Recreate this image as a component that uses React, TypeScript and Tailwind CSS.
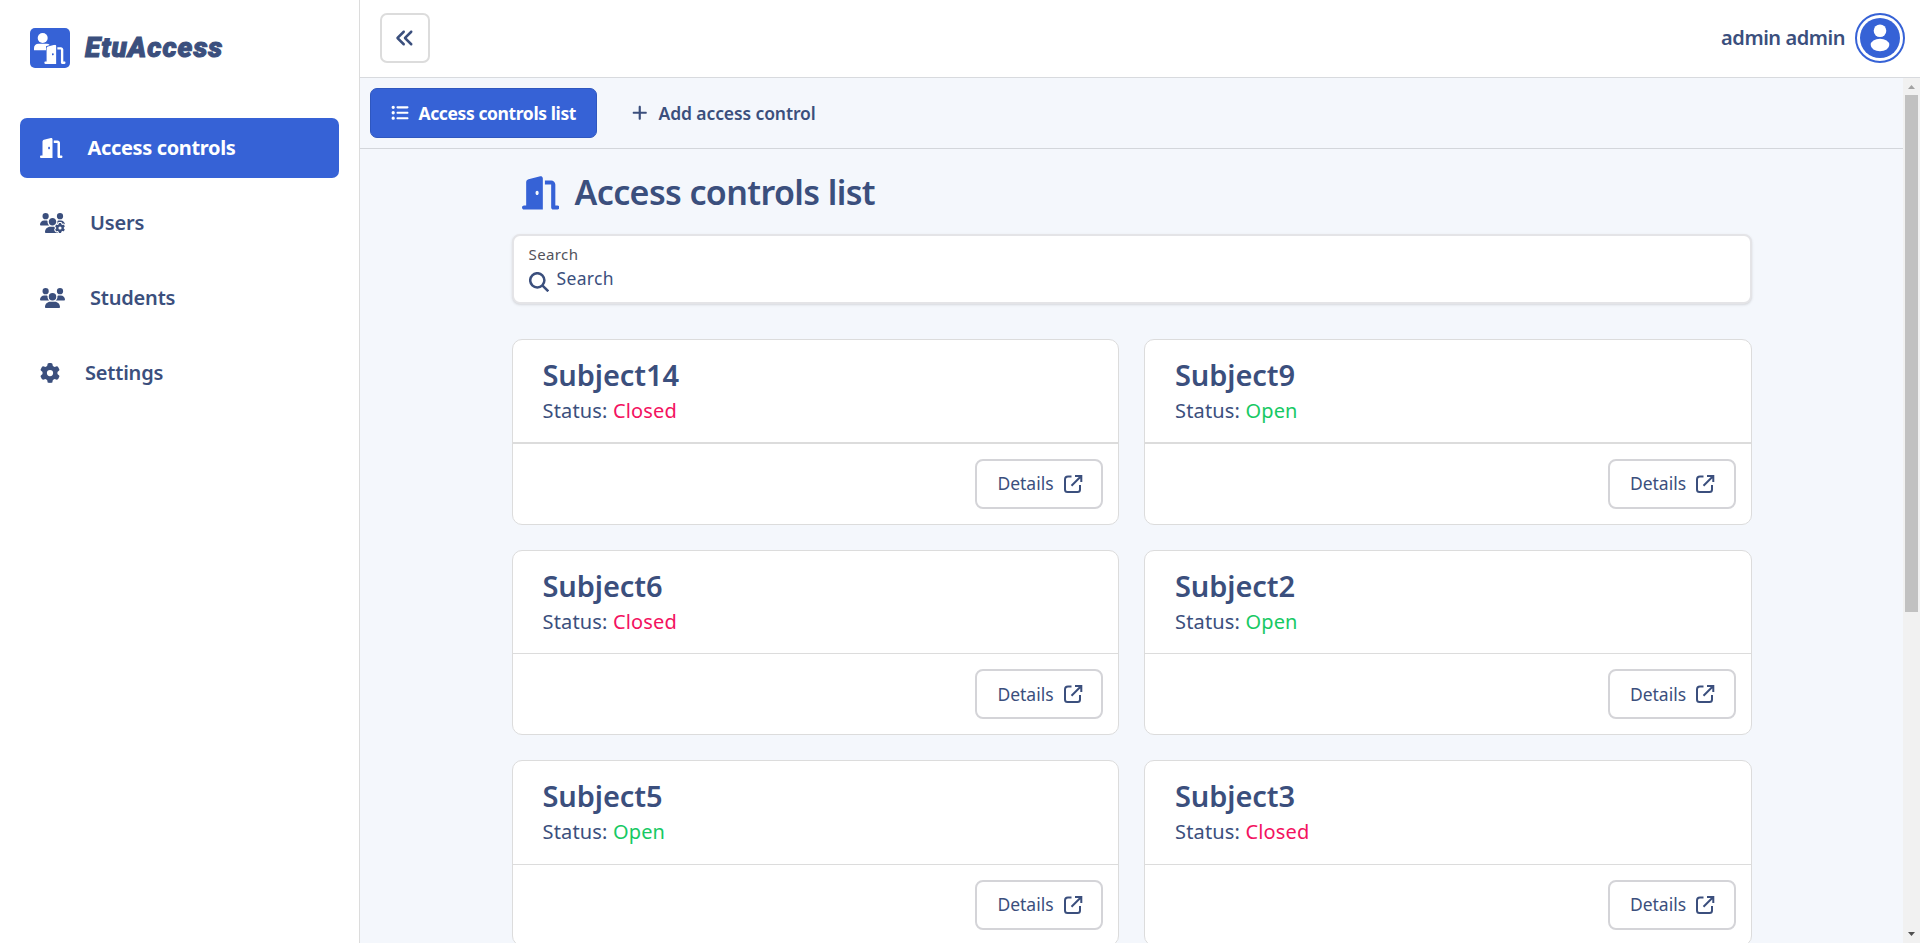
import type { ReactNode } from "react";
import {
  FaDoorOpen,
  FaGear,
  FaUsersGear,
  FaUsers,
  FaAnglesLeft,
  FaListUl,
  FaPlus,
} from "react-icons/fa6";

type Subject = { name: string; open: boolean };

const subjects: Subject[] = [
  { name: "Subject14", open: false },
  { name: "Subject9", open: true },
  { name: "Subject6", open: false },
  { name: "Subject2", open: true },
  { name: "Subject5", open: true },
  { name: "Subject3", open: false },
];

function Logo() {
  return (
    <div className="flex h-10 items-center gap-[15px] pl-[10px]">
      <svg viewBox="0 0 40 40" className="size-10 shrink-0">
        <rect width="40" height="40" rx="5" fill="#3662d6" />
        <circle cx="12.7" cy="10" r="5" fill="#fff" />
        <path d="M4 22.2v-1.700A4.500 4.500 0 0 1 8.500 15.700h8a4.500 4.500 0 0 1 3.300 1.200L16 18.300v3.900Z" fill="#fff" />
        <path d="M16 36V19.500l8.500-3V36Z" fill="#3662d6" />
        <svg x="14.200" y="16.800" width="21.500" height="19.100" viewBox="0 0 576 512">
          <FaDoorOpen color="#fff" size={576} y={-32} />
        </svg>
      </svg>
      <span className="font-['Roboto'] text-[28px] leading-none font-black tracking-[1px] italic [-webkit-text-stroke:1px_#3b4f7d]">
        EtuAccess
      </span>
    </div>
  );
}

function NavItem({ icon, label, active = false }: { icon: ReactNode; label: string; active?: boolean }) {
  return (
    <a
      className={
        active
          ? "flex h-[60px] items-center gap-[25px] rounded-[7px] bg-[#3662d6] px-5 font-bold tracking-[-0.35px] text-white"
          : "flex h-[60px] items-center gap-[25px] rounded-[7px] px-5 font-semibold tracking-[-0.2px]"
      }
    >
      {icon}
      <span className="pb-px text-[20px]">{label}</span>
    </a>
  );
}

function Sidebar() {
  return (
    <aside className="flex w-[360px] shrink-0 flex-col border-r border-[#dcdcdc] bg-white px-5 pt-7">
      <Logo />
      <nav className="mt-[50px] flex flex-col gap-[15px]">
        <NavItem active icon={<FaDoorOpen className="h-5 w-[22.5px]" />} label="Access controls" />
        <NavItem icon={<FaUsersGear className="h-5 w-[25px]" />} label="Users" />
        <NavItem icon={<FaUsers className="h-5 w-[25px]" />} label="Students" />
        <NavItem icon={<FaGear className="size-5" />} label="Settings" />
      </nav>
    </aside>
  );
}

function Header() {
  return (
    <header className="flex h-[78px] shrink-0 items-start justify-between border-b border-[#d8dade] bg-white pt-[13px] pr-[15px] pl-5">
      <button className="flex size-[50px] items-center justify-center rounded-[7px] border-2 border-[#dcdcdc]">
        <FaAnglesLeft className="size-5" />
      </button>
      <div className="flex items-center gap-[10px]">
        <span className="pb-px text-[20px] font-semibold tracking-[-0.45px]">admin admin</span>
        <svg viewBox="0 0 50 50" className="size-[50px]">
          <circle cx="25" cy="25" r="24" fill="#fff" stroke="#3662d6" strokeWidth="2" />
          <circle cx="25" cy="25" r="20" fill="#3662d6" />
          <circle cx="25" cy="17.700" r="6.300" fill="#fff" />
          <ellipse cx="25" cy="32" rx="9.300" ry="6.200" fill="#fff" />
        </svg>
      </div>
    </header>
  );
}

function ExternalIcon() {
  return (
    <svg viewBox="0 0 20 20" className="size-5" fill="none" stroke="currentColor" strokeWidth="2">
      <path d="M8.500 2.500H5A3 3 0 0 0 2 5.500v10a2.500 2.500 0 0 0 2.500 2.500H14.500a2.500 2.500 0 0 0 2.500-2.500V11" />
      <path d="M12 2H18.300v6M18 2.300l-9.500 9.500" />
    </svg>
  );
}

function SubjectCard({ subject, thick }: { subject: Subject; thick: boolean }) {
  return (
    <article className="flex h-[185.6px] flex-col rounded-[10px] border border-[#dcdcdc] bg-white">
      <div className={thick ? "h-[102px] shrink-0 px-[30px] pt-[17px]" : "h-[102.6px] shrink-0 px-[30px] pt-[17px]"}>
        <h2 className="text-[29px] leading-[36px] font-semibold tracking-[-0.1px]">{subject.name}</h2>
        <p className="pt-px text-[20px] leading-[34px] tracking-[0.16px]">
          Status:{" "}
          <span className={subject.open ? "text-[#17c964]" : "text-[#f31260]"}>
            {subject.open ? "Open" : "Closed"}
          </span>
        </p>
      </div>
      <div className={thick ? "h-[2px] shrink-0 bg-[#dcdcdc]" : "h-px shrink-0 bg-[#dcdcdc]"} />
      <div className="flex justify-end pt-[15px] pr-[15px]">
        <button className="flex h-[50px] w-32 items-center justify-center gap-[9px] rounded-[8px] border-2 border-[#d4d4d8] pl-[2px]">
          <span className="pb-px text-[17.5px]">Details</span>
          <ExternalIcon />
        </button>
      </div>
    </article>
  );
}

function Scrollbar() {
  return (
    <div className="flex w-[17px] shrink-0 flex-col items-center bg-[#f1f1f1]">
      <svg viewBox="0 0 17 17" className="size-[17px] shrink-0">
        <path d="M5 11h7L8.500 7Z" fill="#a3a3a3" />
      </svg>
      <div className="h-[517px] w-[13px] bg-[#c1c1c1]" />
      <svg viewBox="0 0 17 17" className="mt-auto size-[17px] shrink-0">
        <path d="M5 6h7L8.500 10Z" fill="#505050" />
      </svg>
    </div>
  );
}

export default function App() {
  return (
    <div className="flex h-[943px] overflow-hidden bg-[#f4f7fc] font-['Noto_Sans',sans-serif] text-[#3b4f7d]">
      <Sidebar />
      <div className="flex min-w-0 flex-1 flex-col">
        <Header />
        <div className="flex min-h-0 flex-1">
          <main className="flex min-w-0 flex-1 flex-col overflow-hidden">
            <div className="flex h-[71px] shrink-0 items-center gap-[14px] border-b border-[#d3d6db] px-[10px]">
              <button className="flex h-[50px] w-[227px] items-center gap-[10px] rounded-[7px] border border-[#2f57bf] bg-[#3662d6] pl-5 text-white">
                <FaListUl className="size-[17.5px]" />
                <span className="text-[17.5px] font-bold tracking-[-0.4px]">Access controls list</span>
              </button>
              <button className="flex h-[50px] items-center gap-[10px] px-5">
                <FaPlus className="size-[17.5px]" />
                <span className="text-[17.5px] font-semibold tracking-[-0.1px]">Add access control</span>
              </button>
            </div>
            <div className="mx-auto flex w-[1240px] shrink-0 flex-col">
              <div className="mt-[22px] flex h-[44px] items-center gap-[15.5px] pl-[10px]">
                <FaDoorOpen className="h-[33.75px] w-[37.5px] text-[#3662d6]" />
                <h1 className="pb-[2px] text-[34px] leading-none font-semibold tracking-[-0.62px]">Access controls list</h1>
              </div>
              <label className="mt-[19px] flex h-[70px] flex-col rounded-[8px] border-2 border-[#e4e4e7] bg-white px-[15px] pt-[8px] shadow-sm">
                <span className="text-[15px] leading-[20px] tracking-[0.4px] text-[#52525b]">Search</span>
                <span className="flex gap-[8px]">
                  <svg viewBox="0 0 20 20" className="mt-[8px] size-5" fill="none" stroke="currentColor" strokeWidth="2.500">
                    <circle cx="8.300" cy="8.300" r="7.100" />
                    <path d="m13.300 13.300 6 6" />
                  </svg>
                  <span className="text-[17.5px] leading-[28px] tracking-[0.35px]">Search</span>
                </span>
              </label>
              <div className="mt-[35px] grid grid-cols-2 gap-[25px]">
                {subjects.map((s, i) => (
                  <SubjectCard key={s.name} subject={s} thick={i < 2} />
                ))}
              </div>
            </div>
          </main>
          <Scrollbar />
        </div>
      </div>
    </div>
  );
}
